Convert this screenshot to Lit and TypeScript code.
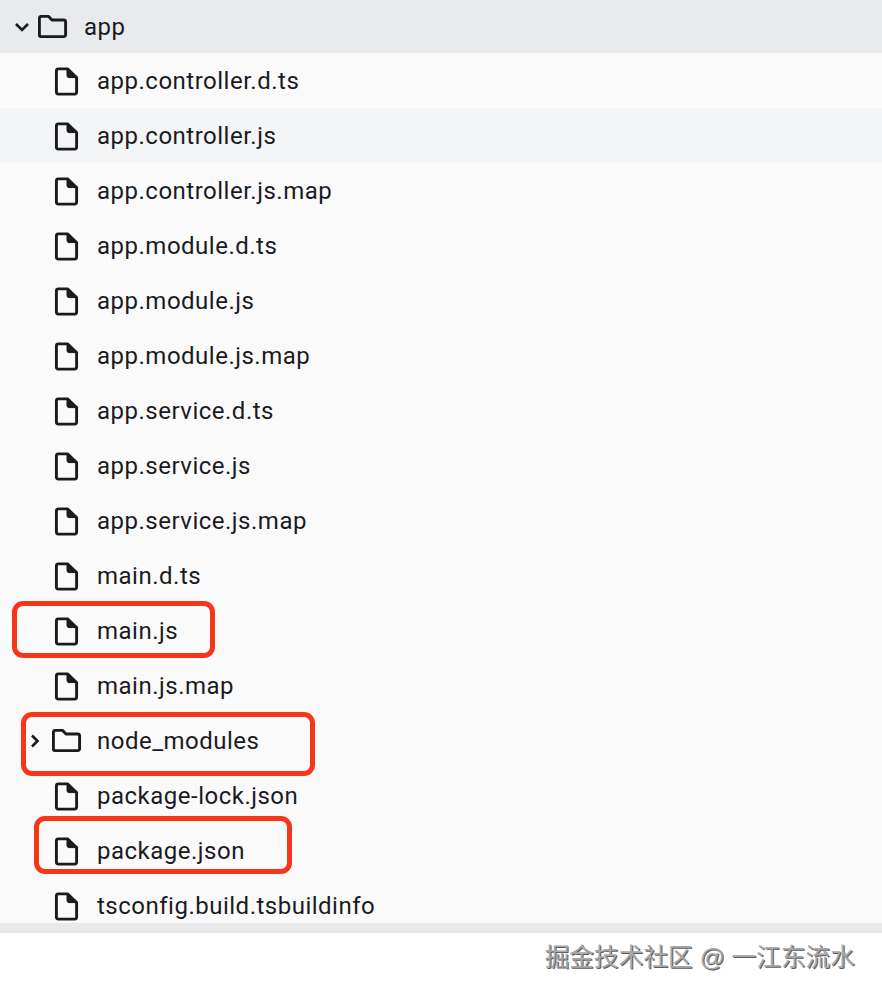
import { LitElement, html, css, svg } from "lit";
import { customElement } from "lit/decorators.js";

type Row = { name: string; folder?: boolean; hover?: boolean; mark?: string };

const rows: Row[] = [
  { name: "app.controller.d.ts" },
  { name: "app.controller.js", hover: true },
  { name: "app.controller.js.map" },
  { name: "app.module.d.ts" },
  { name: "app.module.js" },
  { name: "app.module.js.map" },
  { name: "app.service.d.ts" },
  { name: "app.service.js" },
  { name: "app.service.js.map" },
  { name: "main.d.ts" },
  { name: "main.js", mark: "mark-main" },
  { name: "main.js.map" },
  { name: "node_modules", folder: true, mark: "mark-node" },
  { name: "package-lock.json" },
  { name: "package.json", mark: "mark-pkg" },
  { name: "tsconfig.build.tsbuildinfo" },
];

const fileIcon = svg`<path d="M13.5 2.9H4.4Q2.4 2.9 2.4 4.9V26.1Q2.4 28.1 4.4 28.1H20.6Q22.6 28.1 22.6 26.1V11.6Z" />
  <path d="M13 2.9V9.6Q13 11.6 15 11.6H22.6Z" class="fold" />`;

const folderPath = "M3.4 1.4H10.6L14 5H25.6Q27.6 5 27.6 7V19.6Q27.6 21.6 25.6 21.6H3.4Q1.4 21.6 1.4 19.6V3.4Q1.4 1.4 3.4 1.4Z";

@customElement("app-root")
export class AppRoot extends LitElement {
  static styles = css`
    :host {
      display: block;
      width: 882px;
      height: 998px;
      background: #fff;
      font-family: Roboto, "Noto Sans", sans-serif;
      color: #1b1b1f;
    }
    .tree {
      position: relative;
      background: #fafafb;
      height: 923px;
      border-bottom: 10px solid #e9e9eb;
      overflow: hidden;
    }
    .head {
      display: flex;
      align-items: center;
      height: 53px;
      background: #e9eaed;
    }
    .row {
      display: flex;
      align-items: center;
      height: 55px;
      padding-left: 54px;
    }
    .row.hover {
      background: #f4f5f6;
    }
    .row.dir {
      padding-left: 30px;
    }
    .name {
      font-size: 24px;
      letter-spacing: 0.5px;
      line-height: 30px;
      white-space: nowrap;
    }
    .head .name {
      margin-left: 16px;
    }
    .row.dir .name {
      margin-left: 15px;
    }
    .file {
      width: 25px;
      height: 30px;
      margin-right: 18px;
      flex: none;
    }
    .file path,
    .folder path {
      fill: none;
      stroke: #1b1b1f;
      stroke-width: 2.9;
      stroke-linejoin: round;
    }
    .file path.fold {
      fill: #1b1b1f;
      stroke-width: 1;
    }
    .folder {
      width: 30px;
      height: 24px;
      flex: none;
    }
    .chev {
      flex: none;
      fill: none;
      stroke: #1b1b1f;
      stroke-width: 2.6;
    }
    .head .chev {
      width: 16px;
      height: 10px;
      margin: 0 8px 0 14px;
    }
    .row.dir .chev {
      width: 10px;
      height: 14px;
      margin-right: 12px;
    }
    .mark {
      position: absolute;
      box-sizing: border-box;
      border: 5px solid #f5361b;
      border-radius: 11px;
    }
    .mark-main {
      left: 12px;
      top: 601px;
      width: 203px;
      height: 57px;
    }
    .mark-node {
      left: 21px;
      top: 712px;
      width: 294px;
      height: 64px;
    }
    .mark-pkg {
      left: 34px;
      top: 816px;
      width: 258px;
      height: 58px;
    }
    footer {
      display: flex;
      justify-content: flex-end;
      padding: 8px 27px 0 0;
      font-family: "Liberation Sans", "Noto Sans CJK SC", sans-serif;
      font-size: 24.7px;
      line-height: 34px;
      color: #a8a8a8;
      text-shadow: 1px 1px 0 #5c5c5c;
    }
  `;

  renderRow(r: Row) {
    if (r.folder) {
      return html`<div class="row dir">
        <svg class="chev" viewBox="0 0 10 14"><path d="M2 1.5L7.5 7L2 12.5" /></svg>
        <svg class="folder" viewBox="0 0 30 24"><path d=${folderPath} /></svg>
        <span class="name">${r.name}</span>
      </div>`;
    }
    return html`<div class="row ${r.hover ? "hover" : ""}">
      <svg class="file" viewBox="0 0 25 30">${fileIcon}</svg>
      <span class="name">${r.name}</span>
    </div>`;
  }

  render() {
    return html`
      <div class="tree">
        <div class="head">
          <svg class="chev" viewBox="0 0 16 10"><path d="M2 2L8 8L14 2" /></svg>
          <svg class="folder" viewBox="0 0 30 24"><path d=${folderPath} /></svg>
          <span class="name">app</span>
        </div>
        ${rows.map((r) => this.renderRow(r))}
        ${rows.filter((r) => r.mark).map((r) => html`<div class="mark ${r.mark}"></div>`)}
      </div>
      <footer>掘金技术社区 @ 一江东流水</footer>
    `;
  }
}
